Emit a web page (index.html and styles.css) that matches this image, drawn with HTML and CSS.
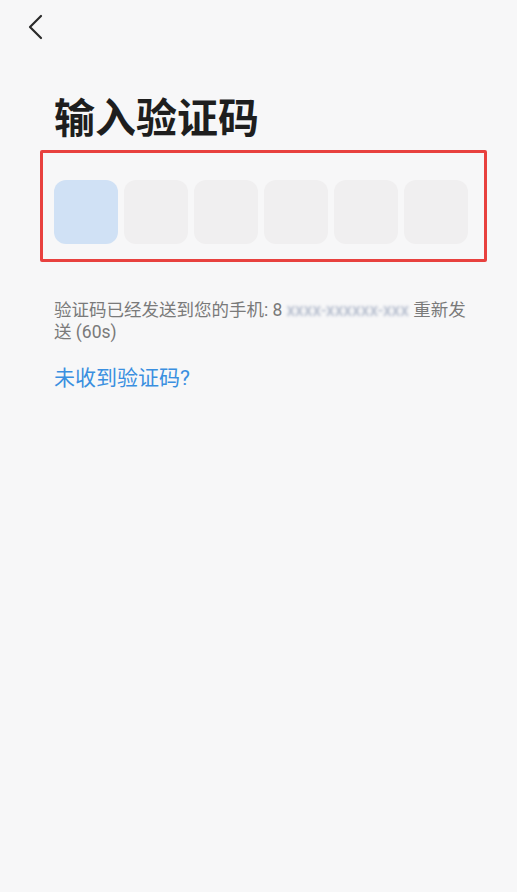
FILE: index.html
```html
<!DOCTYPE html>
<html lang="zh">
<head>
<meta charset="utf-8">
<link rel="stylesheet" href="styles.css">
</head>
<body>
<div class="page">
  <div class="topbar">
    <svg class="back" width="16" height="26" viewBox="0 0 16 26"><polyline points="13,2 2,13 13,24" fill="none" stroke="#2a2a2a" stroke-width="2.2" stroke-linecap="round" stroke-linejoin="round"/></svg>
  </div>
  <h1 class="title">输入验证码</h1>
  <div class="code-frame">
    <div class="code-row">
      <div class="cell active"></div>
      <div class="cell"></div>
      <div class="cell"></div>
      <div class="cell"></div>
      <div class="cell"></div>
      <div class="cell"></div>
    </div>
  </div>
  <p class="hint">验证码已经发送到您的手机: 8<span class="blur">xxxx-xxxxxx-xxx</span> 重新发<br>送 (60s)</p>
  <a class="link">未收到验证码?</a>
</div>
</body>
</html>
```
FILE: styles.css
```css
html, body {
  margin: 0;
  padding: 0;
  background: #f7f7f8;
}
.page {
  width: 517px;
  height: 892px;
  font-family: "Roboto", "Noto Sans CJK SC", sans-serif;
  box-sizing: border-box;
}
.topbar {
  height: 56px;
  padding: 14px 0 0 28px;
  box-sizing: border-box;
}
.back {
  display: block;
}
.title {
  margin: 38px 0 0 54px;
  font-size: 41px;
  font-weight: 700;
  color: #1e1e1e;
  line-height: 50px;
  letter-spacing: 0;
}
.code-frame {
  margin: 6px 0 0 40px;
  width: 447px;
  height: 112px;
  box-sizing: border-box;
  border: 3px solid #e8413f;
  border-radius: 2px;
  padding: 27px 0 0 11px;
}
.code-row {
  display: flex;
  gap: 6px;
}
.cell {
  width: 64px;
  height: 64px;
  border-radius: 12px;
  background: #f0eff0;
}
.cell.active {
  background: #d0e1f5;
}
.hint {
  margin: 37px 0 0 54px;
  width: 440px;
  font-size: 17.5px;
  line-height: 22px;
  color: #7a7a7a;
}
.blur {
  color: transparent;
  text-shadow: 0 0 3px #a6b0c4;
  padding-left: 4px;
}
.link {
  display: block;
  margin: 22px 0 0 54px;
  font-size: 21px;
  line-height: 26px;
  color: #3a8fe0;
}
```
